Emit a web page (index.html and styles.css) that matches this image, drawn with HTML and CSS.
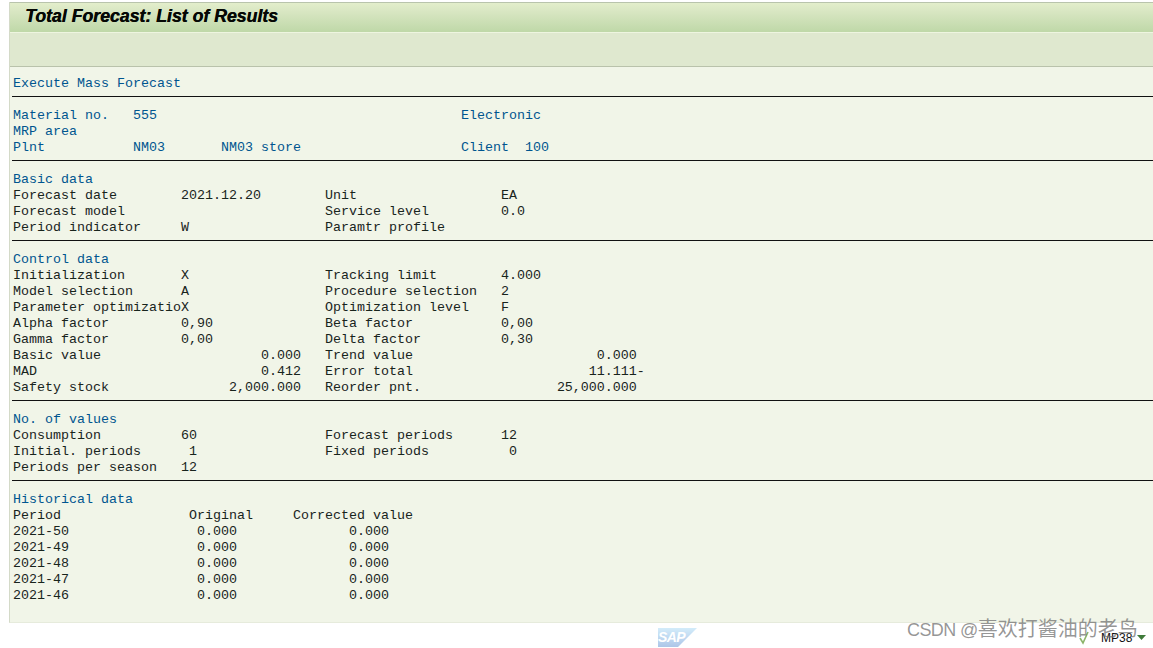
FILE: index.html
```html
<!DOCTYPE html>
<html lang="en">
<head>
<meta charset="utf-8">
<title>Total Forecast: List of Results</title>
<link rel="stylesheet" href="styles.css">
</head>
<body>
<main class="window">
  <header class="titlebar"><h1 class="title">Total Forecast: List of Results</h1></header>
  <div class="toolbar"></div>
  <section class="list">
<pre class="line head">Execute Mass Forecast</pre>
<div class="rule"></div>
<pre class="line head">Material no.   555                                      Electronic</pre>
<pre class="line head">MRP area</pre>
<pre class="line head">Plnt           NM03       NM03 store                    Client  100</pre>
<div class="rule"></div>
<pre class="line head">Basic data</pre>
<pre class="line">Forecast date        2021.12.20        Unit                  EA</pre>
<pre class="line">Forecast model                         Service level         0.0</pre>
<pre class="line">Period indicator     W                 Paramtr profile</pre>
<div class="rule"></div>
<pre class="line head">Control data</pre>
<pre class="line">Initialization       X                 Tracking limit        4.000</pre>
<pre class="line">Model selection      A                 Procedure selection   2</pre>
<pre class="line">Parameter optimizatioX                 Optimization level    F</pre>
<pre class="line">Alpha factor         0,90              Beta factor           0,00</pre>
<pre class="line">Gamma factor         0,00              Delta factor          0,30</pre>
<pre class="line">Basic value                    0.000   Trend value                       0.000</pre>
<pre class="line">MAD                            0.412   Error total                      11.111-</pre>
<pre class="line">Safety stock               2,000.000   Reorder pnt.                 25,000.000</pre>
<div class="rule"></div>
<pre class="line head">No. of values</pre>
<pre class="line">Consumption          60                Forecast periods      12</pre>
<pre class="line">Initial. periods      1                Fixed periods          0</pre>
<pre class="line">Periods per season   12</pre>
<div class="rule"></div>
<pre class="line head">Historical data</pre>
<pre class="line">Period                Original     Corrected value</pre>
<pre class="line">2021-50                0.000              0.000</pre>
<pre class="line">2021-49                0.000              0.000</pre>
<pre class="line">2021-48                0.000              0.000</pre>
<pre class="line">2021-47                0.000              0.000</pre>
<pre class="line">2021-46                0.000              0.000</pre>
  </section>
</main>
<footer class="statusbar">
  <div class="sap">
    <svg class="sap-mark" viewBox="0 0 39 19" width="39" height="19" aria-hidden="true">
      <defs><linearGradient id="sapfill" x1="0" y1="0" x2="0" y2="1"><stop offset="0" stop-color="#d3ecfa"/><stop offset="1" stop-color="#adc6e8"/></linearGradient></defs>
      <polygon points="0,0 39,0 20,19 0,19" fill="url(#sapfill)"/>
    </svg>
    <span class="sap-text">SAP</span>
  </div>
  <svg class="check" viewBox="0 0 10 14" width="10" height="14" aria-hidden="true"><path d="M1 7 L4 12 L9 1" fill="none" stroke="#8cb46a" stroke-width="1.6"/></svg>
  <span class="sys">MP38</span>
  <svg class="tri" viewBox="0 0 9 5" width="9" height="5" aria-hidden="true"><polygon points="0,0 9,0 4.5,5" fill="#3f7a3a"/></svg>
  <span class="mark"><span class="mark-latin">CSDN @</span>喜欢打酱油的老鸟</span>
</footer>
</body>
</html>
```
FILE: styles.css
```css
html, body {
  margin: 0;
  padding: 0;
  height: 648px;
  overflow: hidden;
  background: #ffffff;
}
.window {
  margin: 2px 0 0 9px;
  height: 621px;
  box-sizing: border-box;
  background: #f1f5e8;
  border-left: 1px solid #d4dac8;
  border-bottom: 1px solid #e6ebdc;
}
.titlebar {
  height: 31px;
  box-sizing: border-box;
  border-top: 1px solid #b9c4ac;
  border-bottom: 1px solid #eef5e0;
  background: linear-gradient(#e3eecb 0%, #d8e6c2 30%, #bfd8a8 100%);
  padding-left: 15px;
}
.title {
  margin: 0;
  font: italic bold 17.7px/26px "Liberation Sans", sans-serif;
  color: #050805;
  text-shadow: 0.4px 0 0 #050805;
}
.toolbar {
  height: 33px;
  background: #dfe8cf;
  border-bottom: 1px solid #b9c2ab;
}
.list {
  padding: 9px 0 0 2px;
}
.line {
  margin: 0;
  height: 16px;
  padding-left: 1px;
  font: 13.33px/16px "Liberation Mono", monospace;
  color: #18241c;
}
.head {
  color: #00558f;
}
.rule {
  height: 16px;
  box-sizing: border-box;
  padding-top: 4px;
}
.rule::before {
  content: "";
  display: block;
  height: 1px;
  background: #111111;
}
.statusbar {
  position: relative;
  height: 25px;
}
.sap {
  position: absolute;
  left: 658px;
  top: 5px;
  width: 39px;
  height: 19px;
}
.sap-mark {
  display: block;
}
.sap-text {
  position: absolute;
  left: 0;
  top: 1px;
  font: italic bold 14px/17px "Liberation Sans", sans-serif;
  letter-spacing: -0.6px;
  color: #ffffff;
}
.check {
  position: absolute;
  left: 1079px;
  top: 8px;
}
.sys {
  position: absolute;
  left: 1101px;
  top: 8px;
  font: 12px/14px "Liberation Sans", sans-serif;
  color: #111111;
}
.tri {
  position: absolute;
  left: 1137px;
  top: 12px;
}
.mark {
  position: absolute;
  left: 907px;
  top: -6px;
  font: 20px/24px "Liberation Sans", "Noto Sans CJK SC", sans-serif;
  color: rgba(110, 110, 110, 0.72);
  white-space: nowrap;
}
.mark-latin {
  font-size: 18px;
  letter-spacing: -0.6px;
}
```
